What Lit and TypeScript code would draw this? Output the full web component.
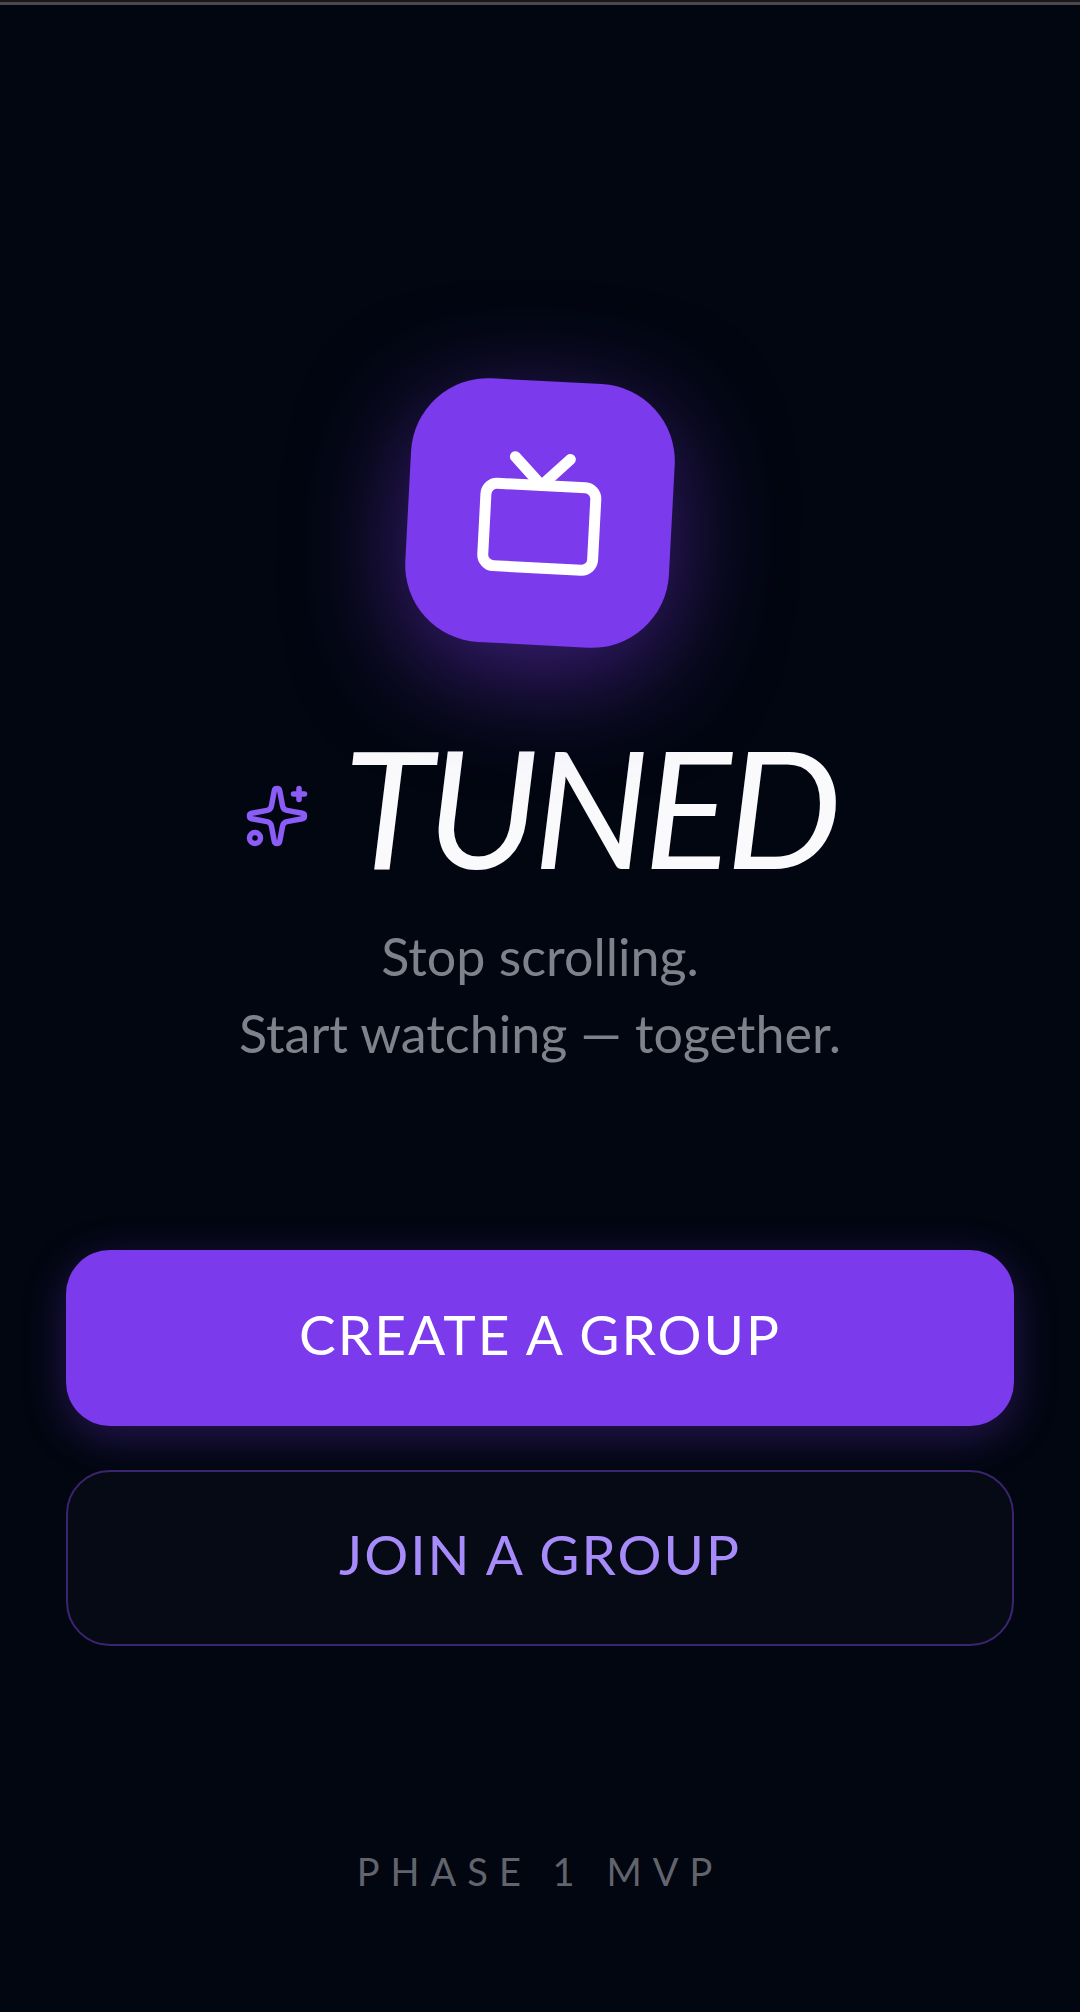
import { LitElement, html, css } from "lit";
import { customElement } from "lit/decorators.js";

@customElement("app-root")
export class AppRoot extends LitElement {
  static styles = css`
    :host {
      display: flex;
      flex-direction: column;
      box-sizing: border-box;
      min-height: 100vh;
      border-top: 2px solid #1a171b;
      background: #020610;
      color: #fafafc;
      font-family: Lato, "Open Sans", sans-serif;
    }
    .edge {
      height: 3px;
      background: #4a484d;
    }
    .page {
      flex: 1;
      display: flex;
      flex-direction: column;
      align-items: center;
      padding: 376px 66px 88px;
    }
    .tile {
      display: flex;
      align-items: center;
      justify-content: center;
      width: 264px;
      height: 264px;
      border-radius: 77px;
      background: #7c3aed;
      box-shadow: 0 28px 110px rgba(124, 58, 237, 0.5);
      transform: rotate(3deg);
    }
    .tv {
      width: 132px;
      height: 132px;
      color: #ffffff;
    }
    .brand {
      display: flex;
      align-items: center;
      gap: 33px;
      margin-top: 88px;
    }
    .sparkles {
      width: 66px;
      height: 66px;
      color: #8b5cf6;
    }
    .name {
      margin: 0;
      padding-bottom: 20px;
      font-size: 164px;
      line-height: 145px;
      font-weight: 400;
      font-style: italic;
      letter-spacing: -6px;
    }
    .tagline {
      margin: 20px 0 0;
      font-size: 52px;
      line-height: 77px;
      text-align: center;
      color: #80828b;
    }
    .actions {
      display: flex;
      flex-direction: column;
      gap: 44px;
      align-self: stretch;
      margin-top: 178px;
    }
    .button {
      height: 176px;
      padding: 0 44px 8px;
      border: 0;
      border-radius: 44px;
      font-family: inherit;
      font-size: 55px;
      letter-spacing: 2px;
      cursor: pointer;
    }
    .primary {
      background: #7c3aed;
      color: #ffffff;
      box-shadow: 0 11px 44px rgba(124, 58, 237, 0.3);
    }
    .secondary {
      border: 2px solid #3b2570;
      background: #060a14;
      color: #a78bfa;
    }
    .phase {
      margin: 200px 0 0;
      font-size: 38px;
      line-height: 50px;
      letter-spacing: 11px;
      color: #62646d;
    }
    svg {
      display: block;
      fill: none;
      stroke: currentColor;
      stroke-width: 2;
      stroke-linecap: round;
      stroke-linejoin: round;
    }
  `;

  render() {
    return html`
      <div class="edge"></div>
      <main class="page">
        <div class="tile">
          <svg class="tv" viewBox="0 0 24 24" aria-hidden="true">
            <path d="m17 2-5 5-5-5" />
            <rect x="2" y="7" width="20" height="15" rx="2" />
          </svg>
        </div>
        <div class="brand">
          <svg class="sparkles" viewBox="0 0 24 24" aria-hidden="true">
            <path
              d="M11.017 2.814a1 1 0 0 1 1.966 0l1.051 5.558a2 2 0 0 0 1.594 1.594l5.558 1.051a1 1 0 0 1 0 1.966l-5.558 1.051a2 2 0 0 0-1.594 1.594l-1.051 5.558a1 1 0 0 1-1.966 0l-1.051-5.558a2 2 0 0 0-1.594-1.594l-5.558-1.051a1 1 0 0 1 0-1.966l5.558-1.051a2 2 0 0 0 1.594-1.594z"
            />
            <path d="M20 2v4" />
            <path d="M22 4h-4" />
            <circle cx="4" cy="20" r="2" />
          </svg>
          <h1 class="name">TUNED</h1>
        </div>
        <p class="tagline">Stop scrolling.<br />Start watching — together.</p>
        <div class="actions">
          <button class="button primary" type="button">CREATE A GROUP</button>
          <button class="button secondary" type="button">JOIN A GROUP</button>
        </div>
        <p class="phase">PHASE 1 MVP</p>
      </main>
    `;
  }
}
